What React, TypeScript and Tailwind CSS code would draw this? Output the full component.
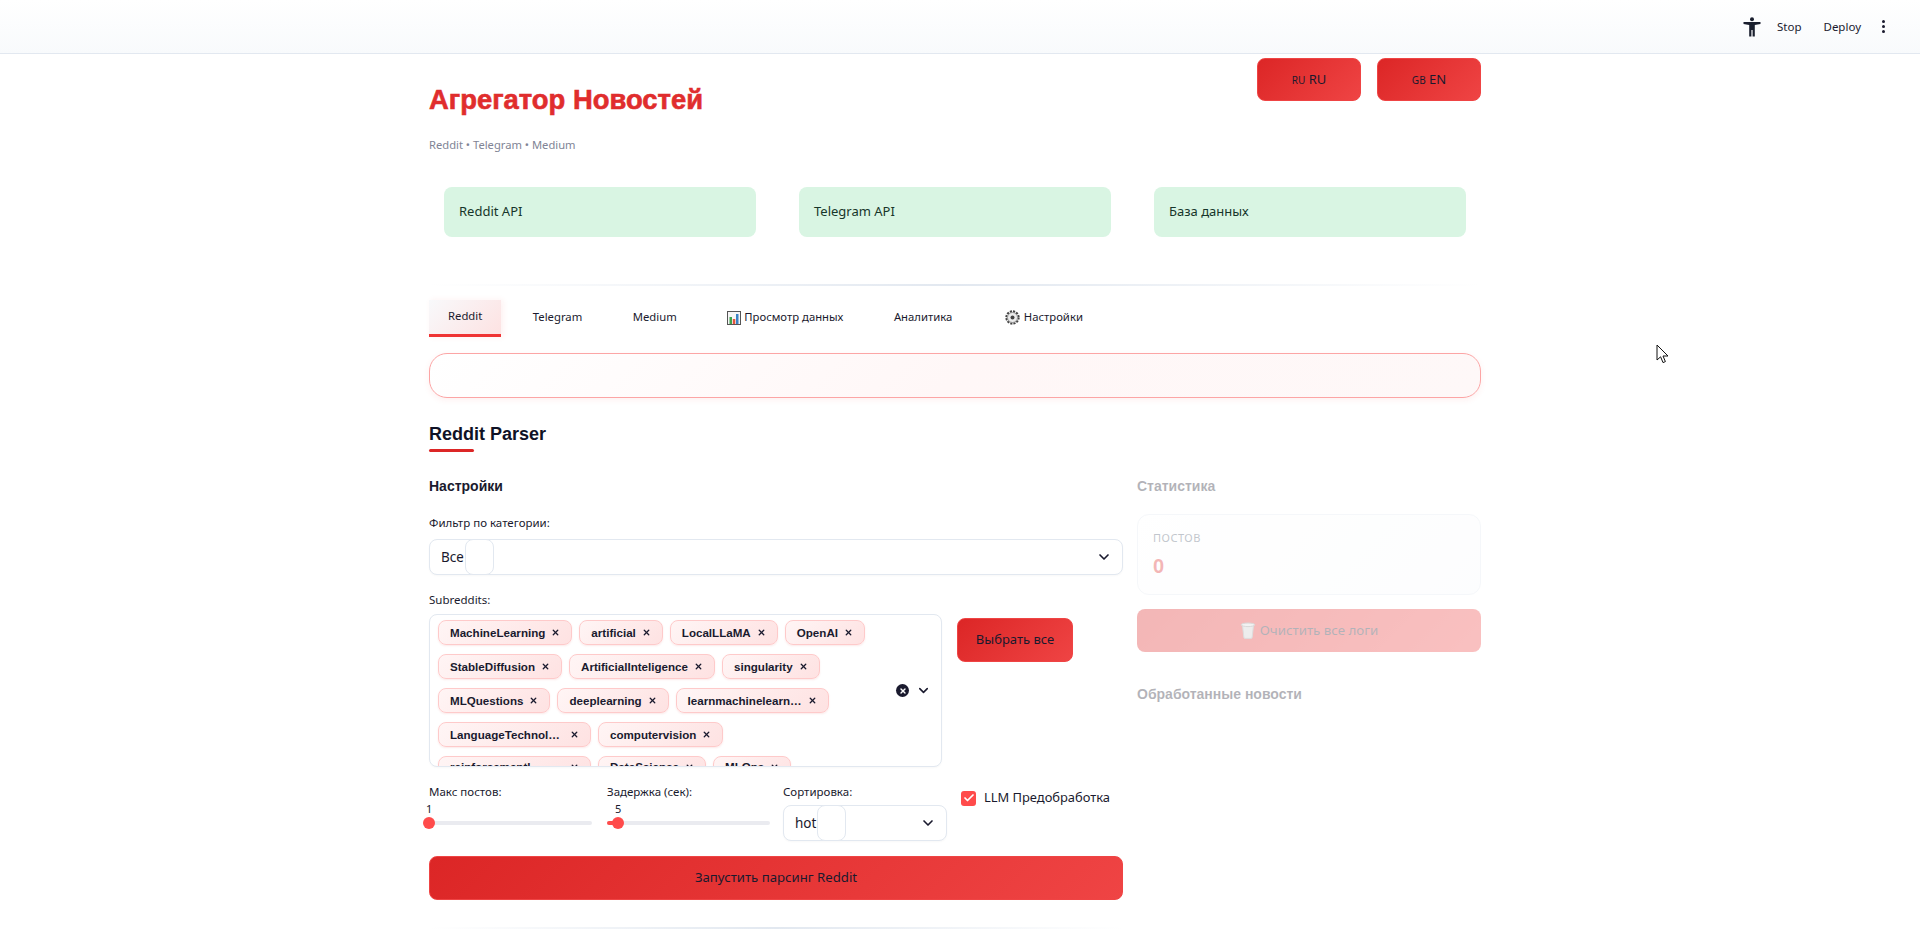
import { ChevronDown, X, Check } from "lucide-react";

const redGrad = "bg-[linear-gradient(135deg,#dc2626_0%,#ef4444_100%)]";
const heading = "font-['Liberation_Sans',Arial,sans-serif] font-bold";

const tagRows = [
  ["MachineLearning", "artificial", "LocalLLaMA", "OpenAI"],
  ["StableDiffusion", "ArtificialInteligence", "singularity"],
  ["MLQuestions", "deeplearning", "learnmachinelearn…"],
  ["LanguageTechnol…", "computervision"],
  ["reinforcementl…", "DataScience", "MLOps"],
];

function Tag({ label }: { label: string }) {
  return (
    <span className="flex h-[25px] items-center gap-[6px] rounded-lg border border-[#fecaca] bg-[linear-gradient(135deg,#fff5f5,#fee2e2)] pl-[11px] pr-[11px] text-[11.6px] font-bold text-[#1a1a2e] font-['Liberation_Sans',Arial,sans-serif] shadow-[0_1px_2px_rgba(220,38,38,0.1)]">
      <span className={label.endsWith("…") ? "w-[114px]" : ""}>{label}</span>
      <X size={9} strokeWidth={3.5} />
    </span>
  );
}

function Select({ value, width }: { value: string; width: string }) {
  return (
    <div className={`relative flex h-[36px] items-center rounded-lg border border-[#e2e8f0] bg-white pl-[11px] pr-[10px] text-[13.5px] text-[#1a1a2e] shadow-[0_1px_2px_rgba(0,0,0,0.03)] ${width}`}>
      <span>{value}</span>
      <span className="ml-[1px] h-[36px] w-[29px] rounded-lg border border-[#e2e8f0] bg-white" />
      <ChevronDown size={16} strokeWidth={2.5} className="ml-auto" />
    </div>
  );
}

function Slider({ label, value, left, fill }: { label: string; value: string; left: string; fill: string }) {
  return (
    <div className="w-[163px]">
      <p className="h-[17px] text-[11.5px] leading-[17px] text-[#1a1a2e]">{label}</p>
      <p className={`mt-[1px] h-[16px] text-[11px] leading-[16px] text-[#1a1a2e] ${left}`}>{value}</p>
      <div className="relative mt-[4px] h-[4px] rounded-full bg-[#eaebf0]">
        <div className={`absolute left-0 top-0 h-[4px] rounded-full bg-[#ff4b4b] ${fill}`} />
        <div className={`absolute top-[-4px] h-[12px] w-[12px] rounded-full bg-[#ff4b4b] ${fill === "w-0" ? "left-[-6px]" : "left-[5px]"}`} />
      </div>
    </div>
  );
}

function Divider({ className }: { className: string }) {
  return <div className={`h-[2px] bg-[linear-gradient(90deg,transparent,#e2e8f0,transparent)] ${className}`} />;
}

function ChartIcon() {
  return (
    <svg width="14" height="14" viewBox="0 0 14 14" className="shrink-0">
      <rect x="0.5" y="0.5" width="13" height="13" fill="#f6f6f6" stroke="#555" />
      <rect x="2.5" y="6" width="2.5" height="7" fill="#3fa34d" />
      <rect x="5.8" y="8" width="2.5" height="5" fill="#e2553d" />
      <rect x="9" y="3" width="2.5" height="10" fill="#3b82c4" />
    </svg>
  );
}

function GearIcon() {
  return (
    <svg width="15" height="15" viewBox="0 0 24 24" className="shrink-0">
      <circle cx="12" cy="12" r="10" fill="#e8e8e8" stroke="#444" strokeWidth="3" strokeDasharray="3.4 1.8" />
      <circle cx="12" cy="12" r="8" fill="#ececec" stroke="#666" strokeWidth="1" />
      <circle cx="12" cy="12" r="3.2" fill="#444" />
    </svg>
  );
}

function TrashIcon() {
  return (
    <svg width="16" height="17" viewBox="0 0 16 17" className="shrink-0">
      <path d="M2.5 3.5 L3.8 15.2 Q3.9 16.4 5 16.4 L11 16.4 Q12.1 16.4 12.2 15.2 L13.5 3.5 Z" fill="#c9c9c9" stroke="#9a9a9a" />
      <ellipse cx="8" cy="2.8" rx="6.8" ry="1.8" fill="#d8d8d8" stroke="#8d8d8d" />
    </svg>
  );
}

function AccessIcon() {
  return (
    <svg width="18" height="20" viewBox="0 0 18 20" fill="#1a1f2e">
      <circle cx="9" cy="2.2" r="2" />
      <path d="M0.5 5 L17.5 5 L17.5 7 L11.8 8 L11.8 19.5 L9.6 19.5 L9.6 13 L8.4 13 L8.4 19.5 L6.2 19.5 L6.2 8 L0.5 7 Z" />
    </svg>
  );
}

export default function App() {
  return (
    <div className="relative h-[945px] overflow-hidden bg-white font-['Noto_Sans',sans-serif] text-[#1a1a2e]">
      <header className="flex h-[54px] items-center justify-end border-b border-[#e2e8f0] bg-[linear-gradient(180deg,#ffffff,#f8fafc)] pr-[35px]">
        <AccessIcon />
        <span className="ml-[16px] text-[11.5px]">Stop</span>
        <span className="ml-[22px] text-[11.5px]">Deploy</span>
        <span className="ml-[21px] flex flex-col gap-[2px]">
          <i className="h-[3px] w-[3px] rounded-full bg-[#1a1a2e]" />
          <i className="h-[3px] w-[3px] rounded-full bg-[#1a1a2e]" />
          <i className="h-[3px] w-[3px] rounded-full bg-[#1a1a2e]" />
        </span>
      </header>

      <main className="mx-auto w-[1052px] -translate-x-[5px]">
        <div className="flex h-[100px] justify-between">
          <div>
            <h1 className={`mt-[28px] text-[27.4px] leading-[36px] text-[#e02d2d] [-webkit-text-stroke:0.6px_#e02d2d] ${heading}`}>Агрегатор Новостей</h1>
            <p className="mt-[19px] text-[11.2px] leading-[16px] text-[#808495]">Reddit • Telegram • Medium</p>
          </div>
          <div className="mt-[4px] flex gap-[15px]">
            {["RU", "EN"].map((code, i) => (
              <button key={code} className={`ml-[1px] h-[43px] w-[104px] rounded-lg border border-[#ef4444] text-[13px] text-[#1a1a2e] ${redGrad}`}>
                <span className="text-[10px]">{i === 0 ? "RU" : "GB"}</span> {code}
              </button>
            ))}
          </div>
        </div>

        <div className="mt-[33px] flex justify-between px-[15px]">
          {["Reddit API", "Telegram API", "База данных"].map((name) => (
            <div key={name} className="flex h-[50px] w-[312px] items-center rounded-lg bg-[#d9f5e3] pl-[15px] text-[13px] text-[#17352a]">
              {name}
            </div>
          ))}
        </div>

        <Divider className="mt-[47px]" />

        <nav className="mt-[14px] flex h-[37px] gap-[12.5px] text-[11.3px] text-[#1a1a2e]">
          <span className="flex items-center border-b-[3px] border-[#ef3434] bg-[linear-gradient(135deg,#f8f9fb,#fde2e2)] px-[19px] pb-[1px] shadow-[2px_0_6px_rgba(239,68,68,0.08)]">Reddit</span>
          <span className="flex items-center px-[19px] pb-[2px]">Telegram</span>
          <span className="flex items-center px-[19px] pb-[2px]">Medium</span>
          <span className="flex items-center gap-[3px] px-[19px] pb-[2px]"><ChartIcon />Просмотр данных</span>
          <span className="flex items-center px-[19px] pb-[2px]">Аналитика</span>
          <span className="ml-[2px] flex items-center gap-[4px] px-[19px] pb-[2px]"><GearIcon />Настройки</span>
        </nav>

        <div className="mt-[16px] h-[45px] rounded-[18px] border border-[#fca5a5] bg-[linear-gradient(135deg,#ffffff,#fff7f7,#fef8f8)] shadow-[0_2px_6px_rgba(239,68,68,0.08)]" />

        <h2 className={`mt-[24px] text-[18px] leading-[24px] text-[#0f1226] ${heading}`}>Reddit Parser</h2>
        <div className="mt-[3px] h-[3px] w-[45px] rounded-full bg-[#dc2626]" />

        <div className="mt-[25px] flex gap-[14px]">
          <section className="w-[694px] shrink-0">
            <h3 className={`text-[14px] leading-[18px] ${heading}`}>Настройки</h3>

            <p className="mt-[20px] h-[16px] text-[11.5px] leading-[16px]">Фильтр по категории:</p>
            <div className="mt-[8px]"><Select value="Все" width="w-[694px]" /></div>

            <p className="mt-[17px] h-[16px] text-[11.5px] leading-[16px]">Subreddits:</p>
            <div className="mt-[6px] flex gap-[15px]">
              <div className="relative h-[153px] w-[513px] overflow-hidden rounded-lg border border-[#e2e8f0] bg-white pl-[8px] pt-[5px] shadow-[0_1px_2px_rgba(0,0,0,0.03)]">
                <div className="flex flex-col gap-[9px]">
                  {tagRows.map((row) => (
                    <div key={row[0]} className="flex gap-[7px] last:[&>span]:pb-[3px]">
                      {row.map((t) => <Tag key={t} label={t} />)}
                    </div>
                  ))}
                </div>
                <span className="absolute left-[466px] top-[69px] flex h-[13px] w-[13px] items-center justify-center rounded-full bg-[#1a1a2e] text-white">
                  <X size={8} strokeWidth={4} />
                </span>
                <ChevronDown size={15} strokeWidth={2.5} className="absolute left-[486px] top-[68px]" />
              </div>
              <button className={`mt-[4px] h-[44px] w-[116px] rounded-lg border border-[#ef4444] text-[13px] ${redGrad}`}>Выбрать все</button>
            </div>

            <div className="mt-[16px] flex gap-[15px]">
              <Slider label="Макс постов:" value="1" left="ml-[-3px]" fill="w-0" />
              <Slider label="Задержка (сек):" value="5" left="pl-[8px]" fill="w-[11px]" />
              <div className="ml-[-2px] w-[164px]">
                <p className="h-[17px] text-[11.5px] leading-[17px]">Сортировка:</p>
                <div className="mt-[5px]"><Select value="hot" width="w-[164px]" /></div>
              </div>
              <label className="ml-[-1px] mt-[7px] flex h-[16px] items-center gap-[8px] text-[12.9px]">
                <span className="flex h-[15px] w-[15px] items-center justify-center rounded-[3px] bg-[#ff4b4b] text-white">
                  <Check size={12} strokeWidth={3.5} />
                </span>
                LLM Предобработка
              </label>
            </div>

            <button className={`mt-[15px] h-[44px] w-[694px] rounded-lg border border-[#ef4444] text-[13.2px] ${redGrad}`}>Запустить парсинг Reddit</button>
            <Divider className="mt-[27px]" />
          </section>

          <section className="flex-1 opacity-[0.33]">
            <h3 className={`text-[14px] leading-[18px] ${heading}`}>Статистика</h3>
            <div className="mt-[19px] h-[81px] rounded-xl border border-[#e2e8f0] bg-[linear-gradient(135deg,#ffffff,#f8fafc)] pl-[15px] pt-[15px]">
              <p className="text-[11px] uppercase leading-[16px] tracking-[0.5px] text-[#475569]">постов</p>
              <p className={`mt-[8px] text-[20px] leading-[24px] text-[#dc2626] ${heading}`}>0</p>
            </div>
            <button className={`mt-[14px] flex h-[43px] w-full items-center justify-center gap-[4px] rounded-lg text-[13.3px] ${redGrad}`}>
              <TrashIcon />Очистить все логи
            </button>
            <h3 className={`mt-[33px] text-[14px] leading-[18px] ${heading}`}>Обработанные новости</h3>
          </section>
        </div>
      </main>

      <svg width="15" height="21" viewBox="0 0 15 21" className="absolute left-[1656px] top-[344px]">
        <path d="M1 1 L1 16 L4.6 12.8 L7 18.6 L9.4 17.6 L7 12 L12 12 Z" fill="#fff" stroke="#111" strokeWidth="1" />
      </svg>
    </div>
  );
}
